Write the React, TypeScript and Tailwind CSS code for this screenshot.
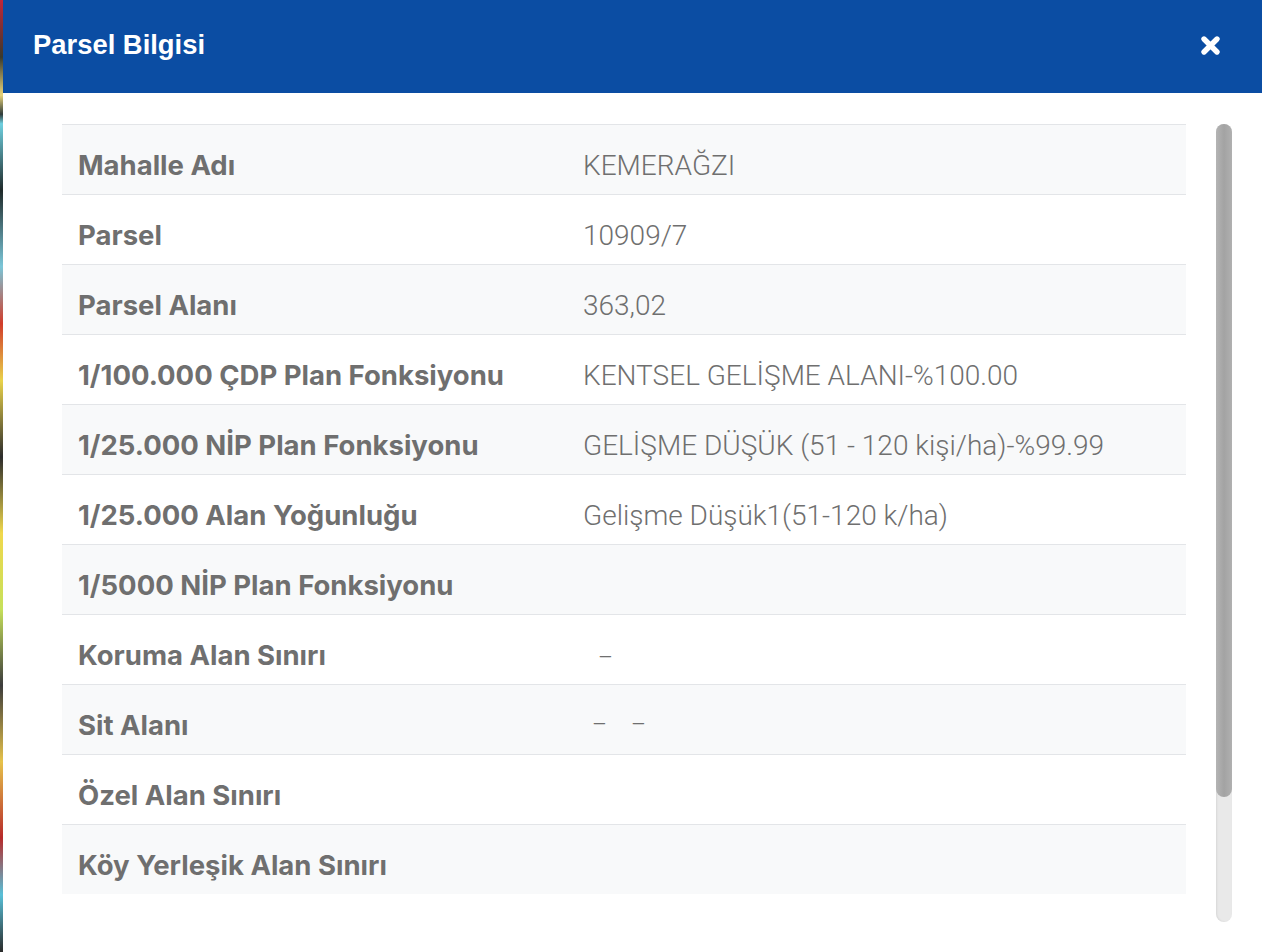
import React from 'react';

// Parsel bilgi satırları
interface ParselRow {
    label: string;
    value: React.ReactNode;
}

const rows: ParselRow[] = [
    { label: 'Mahalle Adı', value: 'KEMERAĞZI' },
    { label: 'Parsel', value: '10909/7' },
    { label: 'Parsel Alanı', value: '363,02' },
    { label: '1/100.000 ÇDP Plan Fonksiyonu', value: 'KENTSEL GELİŞME ALANI-%100.00' },
    { label: '1/25.000 NİP Plan Fonksiyonu', value: 'GELİŞME DÜŞÜK (51 - 120 kişi/ha)-%99.99' },
    { label: '1/25.000 Alan Yoğunluğu', value: 'Gelişme Düşük1(51-120 k/ha)' },
    { label: '1/5000 NİP Plan Fonksiyonu', value: '' },
    { label: 'Koruma Alan Sınırı', value: <span className="ml-[15px] text-[23px]">–</span> },
    {
        label: 'Sit Alanı',
        value: (
            <span className="ml-[9px] flex gap-[24px] text-[23px]">
                <span>–</span>
                <span>–</span>
            </span>
        ),
    },
    { label: 'Özel Alan Sınırı', value: '' },
    { label: 'Köy Yerleşik Alan Sınırı', value: '' },
];

const CloseIcon = () => (
    <svg width="21" height="21" viewBox="0 0 21 21" className="text-white">
        <path d="M4 4 L17 17 M17 4 L4 17" stroke="currentColor" strokeWidth="5.4" strokeLinecap="round" />
    </svg>
);

export default function App() {
    return (
        <div className="w-full h-[952px] flex bg-white overflow-hidden">
            {/* harita kenarı */}
            <div className="w-[3px] h-full bg-[linear-gradient(180deg,#c0263a_0%,#3a3a2c_6%,#e8d37a_10%,#2f3b3a_12%,#6fd0e0_13%,#1f2a2a_20%,#7bc6d8_28%,#d13c2a_34%,#e9d24a_40%,#2c2c2c_48%,#f0d84c_56%,#c6e05a_64%,#3c3c3c_72%,#e6c24a_80%,#b72a2a_88%,#58c0d8_94%,#2a2a2a_100%)]"></div>

            <div className="flex-1 flex flex-col">
                <header className="h-[93px] bg-[#0b4da3] flex items-center justify-between pl-[30px] pr-[41px] shrink-0">
                    <h1 className="text-white text-[27.4px] font-bold font-['Liberation_Sans',Arial,sans-serif] mt-[-4px]">
                        Parsel Bilgisi
                    </h1>
                    <div className="mt-[-2px]">
                        <CloseIcon />
                    </div>
                </header>

                <div className="flex pt-[31px] pl-[59px] pr-[30px]">
                    <div className="w-[1124px] shrink-0">
                        {rows.map((row, i) => (
                            <div
                                key={row.label}
                                className={`h-[70px] flex items-center pt-[12px] border-t border-[#e3e5e8] ${
                                    i % 2 === 0 ? 'bg-[#f8f9fa]' : 'bg-white'
                                }`}
                            >
                                <div className="w-[505px] pl-[16px] text-[27.5px] font-bold text-[#6f6f6f] font-['Inter','Open_Sans',sans-serif]">
                                    {row.label}
                                </div>
                                <div className="flex-1 pl-[16px] text-[28px] text-[#6f6f6f] font-['Roboto','Noto_Sans',sans-serif] font-light">
                                    {row.value}
                                </div>
                            </div>
                        ))}
                    </div>

                    <div className="ml-[30px] w-[16px] h-[798px] rounded-full bg-[#e9e9e9] shadow-[inset_1px_0_2px_rgba(0,0,0,0.08)] flex flex-col">
                        <div className="h-[673px] rounded-full bg-[linear-gradient(90deg,#b4b4b4,#a3a3a3_50%,#b0b0b0)]"></div>
                    </div>
                </div>
            </div>
        </div>
    );
}
